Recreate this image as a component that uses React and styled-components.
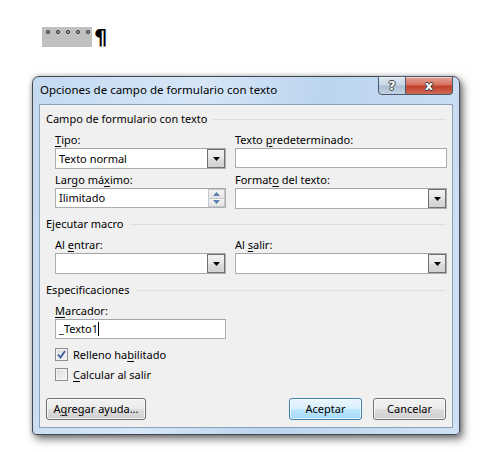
import React from 'react'
import styled, { createGlobalStyle } from 'styled-components'

const GlobalStyle = createGlobalStyle`
  body {
    margin: 0;
    background: #ffffff;
    font-family: "Noto Sans", "Open Sans", sans-serif;
    font-size: 11px;
    color: #000;
  }
`

const Page = styled.div`
  width: 489px;
  height: 452px;
  padding: 27px 0 0 32px;
  box-sizing: border-box;
`

const DocLine = styled.div`
  display: flex;
  align-items: flex-start;
  margin-left: 10px;
  height: 20px;
`

const Marker = styled.div`
  width: 50px;
  height: 20px;
  background: #c0c0c0;
  display: flex;
  align-items: flex-start;
  gap: 6px;
  padding: 3px 0 0 4px;
  box-sizing: border-box;
`

const Dot = styled.span`
  width: 4px;
  height: 4px;
  border: 1px solid #222;
  border-radius: 50%;
  box-sizing: border-box;
`

const Pilcrow = styled.span`
  font-family: "DejaVu Sans", sans-serif;
  font-size: 21px;
  line-height: 20px;
  margin: 1px 0 0 2px;
  font-weight: bold;
`

const Window = styled.div`
  margin-top: 29px;
  width: 428px;
  height: 359px;
  box-sizing: border-box;
  border: 1px solid #444a52;
  border-radius: 7px 7px 4px 4px;
  background: linear-gradient(100deg, #c4daf1 0%, #d6e6f7 35%, #bcd4ee 60%, #cfe1f5 100%);
  box-shadow: 3px 4px 9px rgba(0, 0, 0, 0.55), 0 0 4px rgba(0, 0, 0, 0.25);
  display: flex;
  flex-direction: column;
  padding: 0 6px 6px;
`

const TitleBar = styled.div`
  height: 27px;
  display: flex;
  align-items: flex-start;
  justify-content: space-between;
`

const Title = styled.div`
  padding: 5px 0 0 1px;
  font-size: 11.5px;
  line-height: 16px;
  color: #000;
`

const CaptionButtons = styled.div`
  display: flex;
  margin-top: -1px;
`

const CaptionButton = styled.div`
  height: 19px;
  width: ${p => (p.$close ? '47px' : '28px')};
  box-sizing: border-box;
  border: 1px solid #4a5a6c;
  border-left-width: ${p => (p.$close ? '0' : '1px')};
  border-radius: ${p => (p.$close ? '0 0 4px 0' : '0 0 0 4px')};
  background: ${p =>
    p.$close
      ? 'linear-gradient(#e8a396 0%, #d6725f 45%, #c0402c 55%, #d26a55 100%)'
      : 'linear-gradient(#dfe8f2 0%, #c7d5e5 45%, #adbfd4 55%, #c2d2e4 100%)'};
  display: flex;
  align-items: center;
  justify-content: center;
  color: #fff;
  font-family: "DejaVu Sans", sans-serif;
  font-weight: bold;
  font-size: ${p => (p.$close ? '13px' : '12px')};
  line-height: 1;
  text-shadow: 1px 0 0 #3a3a3a, -1px 0 0 #3a3a3a, 0 1px 0 #3a3a3a, 0 -1px 0 #3a3a3a;
  box-shadow: inset 0 1px 0 rgba(255, 255, 255, 0.5);
`

const Client = styled.div`
  flex: 1;
  border: 1px solid #8ea2b9;
  background: #f0f0f0;
  padding: 6px 6px 0 6px;
  display: flex;
  flex-direction: column;
`

const GroupHeader = styled.div`
  display: flex;
  align-items: center;
  line-height: 16px;
  margin-top: ${p => p.$top || 0}px;

  &::after {
    content: '';
    flex: 1;
    height: 1px;
    background: #d5dfe5;
    margin-left: 6px;
  }
`

const FieldGrid = styled.div`
  display: grid;
  grid-template-columns: 171px 212px;
  column-gap: 9px;
  row-gap: 3px;
  margin: 5px 0 0 9px;
`

const Field = styled.div`
  display: flex;
  flex-direction: column;
`

const Label = styled.div`
  line-height: 15px;
  margin-bottom: 1px;
`

const Key = styled.span`
  text-decoration: underline;
  text-underline-offset: 2px;
`

const Box = styled.div`
  height: ${p => p.$h || 21}px;
  box-sizing: border-box;
  border: 1px solid #abadb3;
  border-top-color: #a3a6ad;
  background: #fff;
  display: flex;
  align-items: center;
  padding-left: 3px;
`

const BoxText = styled.span`
  flex: 1;
  line-height: 16px;
`

const Caret = styled.span`
  display: inline-block;
  width: 1px;
  height: 14px;
  background: #000;
  vertical-align: -3px;
`

const DropButton = styled.div`
  width: 18px;
  height: 19px;
  box-sizing: border-box;
  border: 1px solid #707070;
  background: linear-gradient(#f2f2f2 0%, #e6e6e6 50%, #dcdcdc 51%, #d2d2d2 100%);
  display: flex;
  align-items: center;
  justify-content: center;
`

const Spinner = styled.div`
  width: 17px;
  height: 18px;
  display: flex;
  flex-direction: column;
`

const SpinHalf = styled.div`
  flex: 1;
  box-sizing: border-box;
  border: 1px solid #c6c8cc;
  border-top-width: ${p => (p.$down ? '0' : '1px')};
  background: linear-gradient(#f5f5f5, #e4e4e4);
  display: flex;
  align-items: center;
  justify-content: center;
`

const Check = styled.div`
  display: flex;
  align-items: center;
  gap: 5px;
  height: 20px;
  margin-left: 9px;
  margin-top: ${p => p.$top || 0}px;
`

const CheckBox = styled.span`
  width: 13px;
  height: 13px;
  box-sizing: border-box;
  border: 1px solid #8e8f8f;
  background: linear-gradient(135deg, #dcdcdc, #f6f6f6);
  box-shadow: inset 0 0 0 1px #f4f4f4;
  display: flex;
  align-items: center;
  justify-content: center;
`

const ButtonRow = styled.div`
  display: flex;
  align-items: center;
  gap: 11px;
  margin-top: 14px;
`

const Button = styled.div`
  width: ${p => p.$w || 73}px;
  height: 22px;
  box-sizing: border-box;
  border: 1px solid ${p => (p.$default ? '#3c7fb1' : '#707070')};
  border-radius: 3px;
  background: ${p =>
    p.$default
      ? 'linear-gradient(#eaf6fd 0%, #d9f0fc 50%, #bee6fd 51%, #a7d9f5 100%)'
      : 'linear-gradient(#f2f2f2 0%, #ebebeb 50%, #dddddd 51%, #cfcfcf 100%)'};
  box-shadow: inset 0 0 0 1px rgba(255, 255, 255, 0.7);
  display: flex;
  align-items: center;
  justify-content: center;
  line-height: 16px;
  margin-left: ${p => (p.$push ? 'auto' : '0')};
`

const Arrow = ({ up, color = '#000' }) => (
  <svg width="7" height="4" viewBox="0 0 7 4">
    <path d={up ? 'M0 4 L3.5 0 L7 4 Z' : 'M0 0 L7 0 L3.5 4 Z'} fill={color} />
  </svg>
)

const Combo = ({ text }) => (
  <Box>
    <BoxText>{text}</BoxText>
    <DropButton>
      <Arrow />
    </DropButton>
  </Box>
)

export default function App() {
  return (
    <Page>
      <GlobalStyle />
      <DocLine>
        <Marker>
          <Dot /><Dot /><Dot /><Dot /><Dot />
        </Marker>
        <Pilcrow>¶</Pilcrow>
      </DocLine>

      <Window>
        <TitleBar>
          <Title>Opciones de campo de formulario con texto</Title>
          <CaptionButtons>
            <CaptionButton>?</CaptionButton>
            <CaptionButton $close>x</CaptionButton>
          </CaptionButtons>
        </TitleBar>

        <Client>
          <GroupHeader>Campo de formulario con texto</GroupHeader>
          <FieldGrid>
            <Field>
              <Label><Key>T</Key>ipo:</Label>
              <Combo text="Texto normal" />
            </Field>
            <Field>
              <Label>Texto <Key>p</Key>redeterminado:</Label>
              <Box $h={20} />
            </Field>
            <Field>
              <Label>Largo má<Key>x</Key>imo:</Label>
              <Box $h={20}>
                <BoxText>Ilimitado</BoxText>
                <Spinner>
                  <SpinHalf><Arrow up color="#5b7fb3" /></SpinHalf>
                  <SpinHalf $down><Arrow color="#5b7fb3" /></SpinHalf>
                </Spinner>
              </Box>
            </Field>
            <Field>
              <Label>Format<Key>o</Key> del texto:</Label>
              <Combo />
            </Field>
          </FieldGrid>

          <GroupHeader $top={7}>Ejecutar macro</GroupHeader>
          <FieldGrid>
            <Field>
              <Label>Al <Key>e</Key>ntrar:</Label>
              <Combo />
            </Field>
            <Field>
              <Label>Al <Key>s</Key>alir:</Label>
              <Combo />
            </Field>
          </FieldGrid>

          <GroupHeader $top={8}>Especificaciones</GroupHeader>
          <FieldGrid>
            <Field>
              <Label><Key>M</Key>arcador:</Label>
              <Box $h={20}>
                <BoxText>_Texto1<Caret /></BoxText>
              </Box>
            </Field>
          </FieldGrid>

          <Check $top={5}>
            <CheckBox>
              <svg width="9" height="9" viewBox="0 0 9 9">
                <path d="M1 4.5 L3.5 7.5 L8 1" fill="none" stroke="#3d5a9c" strokeWidth="1.8" />
              </svg>
            </CheckBox>
            <span>Relleno ha<Key>b</Key>ilitado</span>
          </Check>
          <Check>
            <CheckBox />
            <span><Key>C</Key>alcular al salir</span>
          </Check>

          <ButtonRow>
            <Button $w={100}>A<Key>g</Key>regar ayuda...</Button>
            <Button $default $push>Aceptar</Button>
            <Button>Cancelar</Button>
          </ButtonRow>
        </Client>
      </Window>
    </Page>
  )
}
